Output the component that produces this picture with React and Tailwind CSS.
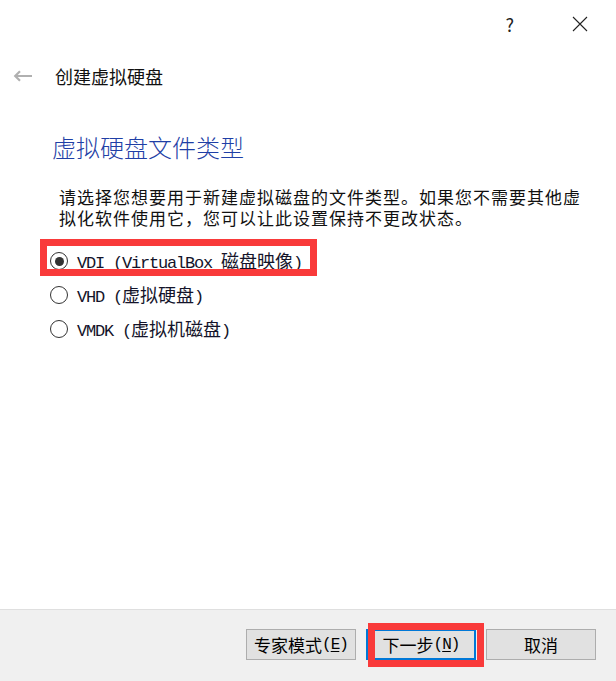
import React from 'react';

const cjk = "font-['Noto_Sans_CJK_SC',sans-serif]";
const mono = "font-['Liberation_Mono',monospace]";

function Mixed({ text, size = 'text-[18px]' }) {
  return text
    .split(/([\x00-\x7f]+)/)
    .filter(Boolean)
    .map((s, i) =>
      /^[\x00-\x7f]+$/.test(s) ? (
        <span key={i} className={`${mono} text-[17px] tracking-[-1.2px] whitespace-pre`}>
          {s}
        </span>
      ) : (
        <span key={i} className={`${cjk} ${size}`}>
          {s}
        </span>
      )
    );
}

function Radio({ checked }) {
  return (
    <span className="w-[18px] h-[18px] rounded-full border border-[#333] bg-white flex items-center justify-center shrink-0">
      {checked && <span className="w-[9px] h-[9px] rounded-full bg-[#333]" />}
    </span>
  );
}

function Button({ label, hot, focused, children }) {
  return (
    <button
      className={`relative w-[110px] h-[31px] bg-[#e1e1e1] border flex items-center justify-center text-black leading-none ${
        focused ? 'border-[#0078d7] border-2' : 'border-[#adadad]'
      }`}
    >
      <span className={`${cjk} text-[17px]`}>{label}</span>
      {hot && (
        <span className={`${mono} text-[16px] tracking-[-1px]`}>
          (<span className="underline underline-offset-2">{hot}</span>)
        </span>
      )}
      {children}
    </button>
  );
}

export default function App() {
  const options = [
    { text: 'VDI (VirtualBox 磁盘映像)', checked: true },
    { text: 'VHD (虚拟硬盘)' },
    { text: 'VMDK (虚拟机磁盘)' },
  ];

  return (
    <div className="w-[616px] h-[681px] bg-white flex flex-col text-black overflow-hidden">
      <div className="h-[48px] flex items-center justify-end gap-[58px] pr-[28px]">
        <span className={`${cjk} text-[18px] text-[#222] leading-none`}>?</span>
        <svg width="16" height="16" viewBox="0 0 16 16" className="text-[#222]">
          <path d="M1 1 L15 15 M15 1 L1 15" stroke="currentColor" strokeWidth="1.1" fill="none" />
        </svg>
      </div>

      <div className="h-[56px] flex items-center pl-[13px] gap-[23px]">
        <svg width="19" height="12" viewBox="0 0 19 12" className="text-[#b0b0b0]">
          <path d="M19 6 H2.5 M7 1.2 L2.2 6 L7 10.8" stroke="currentColor" strokeWidth="2.2" fill="none" />
        </svg>
        <span className={`${cjk} text-[18px] leading-none text-[#111]`}>创建虚拟硬盘</span>
      </div>

      <h1 className={`${cjk} mt-[27px] pl-[52px] text-[24px] leading-[32px] font-light text-[#1f3fa6]`}>
        虚拟硬盘文件类型
      </h1>

      <div className={`${cjk} mt-[23px] pl-[59px] text-[17px] tracking-[1px] leading-[21px] text-[#111]`}>
        <div className="h-[21px]">请选择您想要用于新建虚拟磁盘的文件类型。如果您不需要其他虚</div>
        <div className="h-[21px]">拟化软件使用它，您可以让此设置保持不更改状态。</div>
      </div>

      <div className="mt-[16px] flex flex-col">
        {options.map((o, i) => (
          <div key={i} className="relative h-[34px] flex items-center pl-[50px] gap-[9px] text-[#14142a]">
            <Radio checked={o.checked} />
            <span className="leading-none">
              <Mixed text={o.text} />
            </span>
            {i === 0 && (
              <span className="absolute left-[40px] top-[-5px] w-[277px] h-[37px] border-[7px] border-[#f93a3a] pointer-events-none" />
            )}
          </div>
        ))}
      </div>

      <div className="mt-auto h-[72px] border-t border-[#dfdfdf] bg-[#f0f0f0] pt-[19px] pr-[20px] flex justify-end gap-[10px]">
        <Button label="专家模式" hot="E" />
        <Button label="下一步" hot="N" focused>
          <span className="absolute left-[0px] top-[-8px] w-[116px] h-[44px] border-[7px] border-[#f93a3a] pointer-events-none" />
        </Button>
        <Button label="取消" />
      </div>
    </div>
  );
}
